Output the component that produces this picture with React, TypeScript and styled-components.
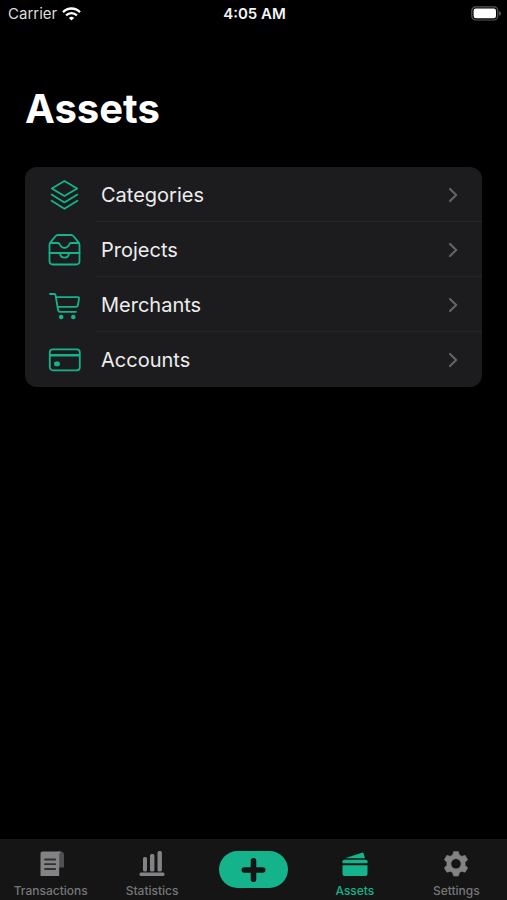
import React from "react";
import styled, { createGlobalStyle } from "styled-components";

const accent = "#14b38c";

const GlobalStyle = createGlobalStyle`
  * { box-sizing: border-box; }
  body {
    margin: 0;
    background: #000;
    color: #fff;
    font-family: Inter, "Liberation Sans", sans-serif;
  }
`;

const Screen = styled.div`
  display: flex;
  flex-direction: column;
  min-height: 100vh;
  background: #000;
`;

const StatusBar = styled.header`
  display: grid;
  grid-template-columns: 1fr auto 1fr;
  align-items: center;
  height: 27px;
  padding: 0 6px 0 8px;
  font-size: 15px;
  line-height: 18px;
  color: #dcdcde;
`;

const Carrier = styled.div`
  display: flex;
  align-items: center;
  gap: 5px;
`;

const Clock = styled.time`
  font-weight: 600;
  color: #f4f4f5;
`;

const BatteryIcon = styled.svg`
  justify-self: end;
`;

const Content = styled.main`
  flex: 1;
  padding: 58px 25px 24px;
`;

const Title = styled.h1`
  margin: 0 0 34px;
  font-size: 40px;
  line-height: 48px;
  font-weight: 700;
`;

const AssetList = styled.ul`
  list-style: none;
  margin: 0;
  padding: 0;
  border-radius: 12px;
  background: #1c1c1e;
  overflow: hidden;
`;

const AssetLink = styled.a`
  display: flex;
  align-items: center;
  height: 55px;
  padding-left: 23px;
  gap: 16px;
  color: #ededef;
  text-decoration: none;
`;

const AssetIcon = styled.svg`
  flex: none;
  overflow: visible;
  fill: none;
  stroke: ${accent};
  stroke-width: 1.8;
  stroke-linecap: round;
  stroke-linejoin: round;
`;

const AssetBody = styled.span<{ $divided: boolean }>`
  flex: 1;
  align-self: stretch;
  display: flex;
  align-items: center;
  justify-content: space-between;
  padding: 2px 24px 0 5px;
  border-bottom: 1px solid ${(p) => (p.$divided ? "#272729" : "transparent")};
  font-size: 20px;
  line-height: 24px;
`;

const TabBar = styled.nav`
  display: grid;
  grid-template-columns: repeat(5, 1fr);
  height: 61px;
  background: #151515;
  border-top: 1px solid #181818;
`;

const Tab = styled.a<{ $active?: boolean }>`
  display: flex;
  flex-direction: column;
  align-items: center;
  gap: 5px;
  padding-top: 10px;
  color: ${(p) => (p.$active ? accent : "#77777a")};
  font-size: 12px;
  line-height: 16px;
  font-weight: 500;
  text-decoration: none;
`;

const AddButton = styled.button`
  display: flex;
  align-items: center;
  justify-content: center;
  justify-self: center;
  width: 69px;
  height: 37px;
  margin-top: 11px;
  padding: 0;
  border: 0;
  border-radius: 19px;
  background: ${accent};
`;

const assets = [
  {
    label: "Categories",
    icon: (
      <>
        <path d="M16.4 2 29.2 9.5 16.4 17 3.8 9.5Z" />
        <path d="M3.6 15.6 16.4 23.4 29.4 15.6" />
        <path d="M3.6 21.8 16.4 29.8 29.4 21.8" />
      </>
    ),
  },
  {
    label: "Projects",
    icon: (
      <>
        <path d="M1.5 11Q1.5 9.6 2.4 8.4L7.4 2.3Q8.4 1 10 1H23Q24.6 1 25.6 2.3L30.6 8.4Q31.5 9.6 31.5 11V27Q31.5 30.5 28 30.5H5Q1.5 30.5 1.5 27Z" />
        <path d="M2.5 9H10C12.6 9 11.4 13.8 16.5 13.8S20.4 9 23 9H30.5" />
        <path d="M1.5 19H31.5M12 19.2C12.6 25.2 20.4 25.2 21 19.2" />
      </>
    ),
  },
  {
    label: "Merchants",
    icon: (
      <>
        <path d="M2 5H6.2Q7.3 5 7.5 6L10.1 21Q10.4 22.8 12 22.8H28" />
        <path d="M8 8.2H30Q31.2 8.2 31 9.5L29.9 16.3Q29.6 17.8 28 17.8H9.6" />
        <circle cx="13.2" cy="28" r="1.4" fill={accent} />
        <circle cx="25.3" cy="28" r="1.4" fill={accent} />
      </>
    ),
  },
  {
    label: "Accounts",
    icon: (
      <>
        <rect x="1.8" y="5.3" width="30" height="21" rx="3" />
        <path d="M2 11.2H31.6" strokeWidth="2.6" strokeLinecap="butt" />
        <rect x="7" y="18.3" width="4" height="3" rx="1" fill={accent} />
      </>
    ),
  },
];

const WifiIcon = () => (
  <svg width="19" height="14" viewBox="0 0 19 14" fill="none" stroke="#fff" strokeWidth="2.3" aria-hidden="true">
    <path d="M1 5.1C5.9.3 13.1.3 18 5.1" />
    <path d="M4.1 8.3C7.2 5.3 11.8 5.3 14.9 8.3" />
    <path d="M6.9 10.9Q9.5 8.6 12.1 10.9L9.5 13.6Z" fill="#fff" stroke="none" />
  </svg>
);

const Battery = () => (
  <BatteryIcon width="30" height="15" viewBox="0 0 30 15" role="img" aria-label="Battery full">
    <rect x=".8" y=".8" width="26" height="13.2" rx="4" fill="none" stroke="#59595b" strokeWidth="1.2" />
    <rect x="2.6" y="2.6" width="22.4" height="9.6" rx="2.2" fill="#fff" />
    <path d="M28 5Q30 5.7 30 7.4T28 9.8Z" fill="#59595b" />
  </BatteryIcon>
);

const Chevron = () => (
  <svg width="10" height="16" viewBox="0 0 10 16" fill="none" stroke="#636366" strokeWidth="2.2" strokeLinecap="round" strokeLinejoin="round" aria-hidden="true">
    <path d="M2 2 8.2 8 2 14" />
  </svg>
);

const TransactionsIcon = () => (
  <svg width="26" height="28" viewBox="0 0 26 28" aria-hidden="true">
    <path d="M20 1.5H22.5Q26 1.5 26 5V17.5H21Z" fill="#505052" />
    <path d="M4.5 1.5H23Q21.2 2.6 21.2 5V26H2.5V3.5Q2.5 1.5 4.5 1.5Z" fill="#838385" />
    <path d="M7 9.5H17.2M7 14.2H17.2M7 19H17.2" stroke="#303032" strokeWidth="1.8" strokeLinecap="round" />
  </svg>
);

const StatisticsIcon = () => (
  <svg width="26" height="28" viewBox="0 0 26 28" fill="#838385" aria-hidden="true">
    <rect x="4" y="7" width="4" height="14.5" rx="1.6" />
    <rect x="11" y="4" width="4.4" height="17.5" rx="1.6" />
    <rect x="18.5" y="1" width="4.4" height="20.5" rx="1.6" />
    <rect x=".5" y="22.6" width="25" height="3.4" rx="1.5" />
  </svg>
);

const WalletIcon = () => (
  <svg width="26" height="28" viewBox="0 0 26 28" fill={accent} aria-hidden="true">
    <path d="M3.2 8.2 19.8 2.7Q21.2 2.3 21.7 3.7L23 8.2Z" />
    <path d="M.5 13.2V11.2Q.5 9.7 2 9.7H24Q25.5 9.7 25.5 11.2V13.2Z" />
    <path d="M.5 15.2H25.5V24Q25.5 26 23.5 26H2.5Q.5 26 .5 24Z" />
  </svg>
);

const GearIcon = () => (
  <svg width="26" height="28" viewBox="-13.5 -13.8 27 28" fill="#838385" aria-hidden="true">
    <path
      fillRule="evenodd"
      d="M-2.4-12.6H2.4L3.4-9.1 6-7.7 9.4-8.7 12-4.3 9.4-1.6V1.6L12 4.3 9.4 8.7 6 7.7 3.4 9.1 2.4 12.6H-2.4L-3.4 9.1-6 7.7-9.4 8.7-12 4.3-9.4 1.6V-1.6L-12-4.3-9.4-8.7-6-7.7-3.4-9.1ZM0-5.4A5.4 5.4 0 1 0 0 5.4A5.4 5.4 0 1 0 0-5.4Z"
      stroke="#838385"
      strokeWidth=".8"
      strokeLinejoin="round"
    />
  </svg>
);

export default function App() {
  return (
    <Screen>
      <GlobalStyle />
      <StatusBar>
        <Carrier>
          <span>Carrier</span>
          <WifiIcon />
        </Carrier>
        <Clock>4:05 AM</Clock>
        <Battery />
      </StatusBar>
      <Content>
        <Title>Assets</Title>
        <AssetList>
          {assets.map(({ label, icon }, i) => (
            <li key={label}>
              <AssetLink href={`#${label.toLowerCase()}`}>
                <AssetIcon width="32" height="32" viewBox="0 0 32 32" aria-hidden="true">
                  {icon}
                </AssetIcon>
                <AssetBody $divided={i < assets.length - 1}>
                  {label}
                  <Chevron />
                </AssetBody>
              </AssetLink>
            </li>
          ))}
        </AssetList>
      </Content>
      <TabBar>
        <Tab href="#transactions">
          <TransactionsIcon />
          Transactions
        </Tab>
        <Tab href="#statistics">
          <StatisticsIcon />
          Statistics
        </Tab>
        <AddButton type="button" aria-label="Add">
          <svg width="26" height="26" viewBox="0 0 26 26" stroke="#151515" strokeWidth="5.6" strokeLinecap="round" aria-hidden="true">
            <path d="M13.5 3.8V22.2M4.3 13H22.7" />
          </svg>
        </AddButton>
        <Tab href="#assets" $active aria-current="page">
          <WalletIcon />
          Assets
        </Tab>
        <Tab href="#settings">
          <GearIcon />
          Settings
        </Tab>
      </TabBar>
    </Screen>
  );
}
